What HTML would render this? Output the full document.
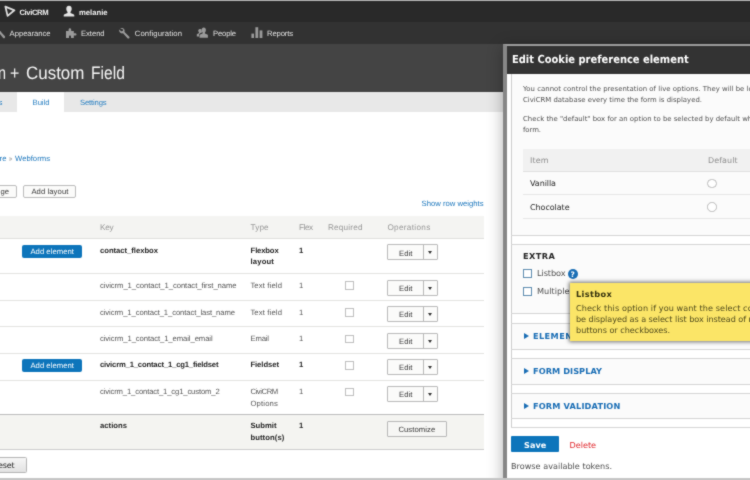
<!DOCTYPE html>
<html lang="en">
<head>
<meta charset="utf-8">
<title>Webform + Custom Field | Build</title>
<style>
html,body{margin:0;padding:0;background:#fff;}
body{text-rendering:geometricPrecision;width:750px;height:480px;overflow:hidden;position:relative;font-family:"Liberation Sans",sans-serif;}
#page{position:absolute;left:0;top:0;width:750px;height:480px;overflow:hidden;background:#fff;filter:url(#soft);}
.a{position:absolute;box-sizing:border-box;}
.t{position:absolute;white-space:nowrap;transform-origin:0 50%;display:block;}
.btn{position:absolute;box-sizing:border-box;border:1px solid #bcbcbc;border-radius:2px;background:#fbfbfa;}
.pbtn{position:absolute;box-sizing:border-box;border-radius:2px;background:#0d75bb;}
.hl{position:absolute;height:1px;left:0;width:484px;background:#e3e3e0;}
.cb{position:absolute;box-sizing:border-box;width:9.4px;height:8.8px;border:1px solid #bfbfbf;background:#fff;left:345px;}
.db{position:absolute;box-sizing:border-box;left:387px;width:51px;height:16px;border:1px solid #bababa;border-radius:1px;background:#fbfbfa;}
.db i{position:absolute;left:35.4px;top:0;bottom:0;width:1px;background:#b8b8b8;}
.db b{position:absolute;left:40px;top:6px;width:0;height:0;border-left:2.7px solid transparent;border-right:2.7px solid transparent;border-top:3.2px solid #333;}
.dl{position:absolute;height:1px;left:511px;width:239px;background:#d5d5d5;}
.dcb{position:absolute;box-sizing:border-box;left:523px;width:9.2px;height:9.2px;border:1px solid #5f8db0;background:#fff;}
.rad{position:absolute;box-sizing:border-box;width:9.4px;height:9.4px;border-radius:50%;border:1px solid #b9b9b9;background:#fff;left:707.3px;}
.tri{position:absolute;width:0;height:0;border-top:3px solid transparent;border-bottom:3px solid transparent;border-left:5.4px solid #1a6eb5;left:523.8px;}
</style>
</head>
<body>
<svg width="0" height="0" style="position:absolute"><defs><filter id="soft" x="0" y="0" width="100%" height="100%" color-interpolation-filters="sRGB"><feConvolveMatrix order="3" kernelMatrix="0.03 0.08 0.03 0.08 0.56 0.08 0.03 0.08 0.03" divisor="1" edgeMode="duplicate" preserveAlpha="true"/></filter></defs></svg>
<div id="page">
  <!-- admin toolbar -->
  <div class="a" style="left:0;top:0;width:750px;height:22px;background:#292929;"></div>
  <div class="a" style="left:0;top:0;width:750px;height:1px;background:#b5b5b5;"></div>
  <div class="a" style="left:0;top:22px;width:750px;height:22px;background:#323232;"></div>
  <!-- page header -->
  <div class="a" style="left:0;top:44px;width:750px;height:48px;background:#444444;"></div>
  <!-- tabs -->
  <div class="a" style="left:0;top:92px;width:750px;height:20px;background:#e8e8e8;"></div>
  <div class="a" style="left:17px;top:92px;width:47px;height:20px;background:#ffffff;"></div>

  <!-- toolbar icons -->
  <svg class="a" style="left:0;top:0;" width="300" height="44" viewBox="0 0 300 44">
    <!-- CiviCRM -->
    <path d="M5.4 6.6 L14.4 10.3 L7.6 15.9 Z" fill="none" stroke="#dedede" stroke-width="1.8" stroke-linejoin="round"/>
    <!-- user -->
    <path d="M69 5.8c1.7 0 2.7 1.3 2.7 3 0 1.3-.5 2.4-1.2 3.1v1l3 1.3c.5.2.8.6.8 1.1v1.2H63.700v-1.200c0-.5.3-.9.8-1.100l3-1.300v-1c-.7-.7-1.200-1.800-1.200-3.100 0-1.700 1-3 2.700-3z" fill="#e4e4e4"/>
    <!-- wrench (appearance, clipped) -->
    <path d="M-1 31.500l1.500-.5 1.200 1.700 3 3.400c.6.700.5 1.500 0 1.900-.5.400-1.200.3-1.700-.3l-3-3.700-1.800-.3z" fill="#9a9a9a"/>
    <!-- puzzle (extend) -->
    <path d="M66 31h2.600v-1.300c0-.9.600-1.500 1.300-1.500s1.300.6 1.300 1.500V31h2.600v2.200h1.200c.9 0 1.500.5 1.500 1.200s-.6 1.200-1.500 1.200h-1.200v2.400h-2.800v-1.400c0-.6-.4-1-1-1s-1 .4-1 1V38H66z" fill="#9a9a9a"/>
    <!-- wrench (configuration) -->
    <path d="M120.200 28.300c1.500-.7 3.200-.2 4 1 .5.800.6 1.700.3 2.600l4.600 4.500c.6.600.6 1.400.1 1.900s-1.400.4-1.900-.2l-4.300-4.800c-.9.300-1.900.1-2.700-.5-1-.8-1.400-2.100-1-3.300l1.900 1.800 1.600-.4.400-1.500z" fill="#9a9a9a"/>
    <!-- people -->
    <path d="M203.800 27.600c1.300 0 2.100 1 2.100 2.400 0 1-.4 1.900-1 2.500v.9l2.400 1.100c.4.200.6.500.6.900v2.400h-8.400v-2.400c0-.4.200-.7.600-.9l2.500-1.100v-.9c-.6-.6-1-1.500-1-2.500 0-1.400.9-2.400 2.200-2.400z" fill="#9a9a9a"/>
    <path d="M200.400 29c.5 0 .9.200 1.200.5-.1 1 .1 2 .7 2.800l-2.100 1c-.8.300-1.200.9-1.200 1.700v1.500h-2.200v-1.900c0-.3.200-.6.500-.7l1.700-.8v-.7c-.5-.4-.8-1.100-.8-1.800 0-1 .8-1.600 2.200-1.600z" fill="#9a9a9a"/>
    <!-- reports (bars) -->
    <rect x="251.400" y="33.600" width="2.600" height="4.400" fill="#9a9a9a"/>
    <rect x="255.400" y="27.200" width="2.800" height="10.800" fill="#9a9a9a"/>
    <rect x="259.600" y="30.400" width="2.800" height="7.600" fill="#9a9a9a"/>
  </svg>

  <!-- local action buttons -->
  <div class="btn" style="left:-10px;top:185px;width:26.600px;height:12.600px;"></div>
  <div class="btn" style="left:23.200px;top:185px;width:53.200px;height:12.600px;"></div>

  <!-- table -->
  <div class="a" style="left:0;top:216px;width:484px;height:22.500px;background:#f4f4f2;border-bottom:1px solid #e0e0dd;"></div>
  <div class="hl" style="top:273px;"></div>
  <div class="hl" style="top:299.800px;"></div>
  <div class="hl" style="top:326.400px;"></div>
  <div class="hl" style="top:353.200px;"></div>
  <div class="hl" style="top:379.600px;"></div>
  <div class="a" style="left:0;top:414px;width:484px;height:36px;background:#f4f4f1;border-top:1px solid #bcbcbc;border-bottom:1px solid #cdcdcd;"></div>

  <div class="pbtn" style="left:22px;top:245px;width:60px;height:13px;"></div>
  <div class="pbtn" style="left:22px;top:359.300px;width:60px;height:13px;"></div>

  <div class="cb" style="top:281.300px;"></div>
  <div class="cb" style="top:307.900px;"></div>
  <div class="cb" style="top:334.500px;"></div>
  <div class="cb" style="top:361px;"></div>
  <div class="cb" style="top:387.600px;"></div>

  <div class="db" style="top:244.400px;"><i></i><b></b></div>
  <div class="db" style="top:279.500px;"><i></i><b></b></div>
  <div class="db" style="top:306px;"><i></i><b></b></div>
  <div class="db" style="top:332.600px;"><i></i><b></b></div>
  <div class="db" style="top:359px;"><i></i><b></b></div>
  <div class="db" style="top:386px;"><i></i><b></b></div>
  <div class="btn" style="left:387px;top:421px;width:59.600px;height:16px;border-color:#b8b8b8;background:#f6f6f4;border-radius:1px;"></div>

  <div class="btn" style="left:-10px;top:457.300px;width:37px;height:16.200px;border-color:#b4b4b4;background:linear-gradient(#f6f6f6,#e2e2e2);border-radius:1.5px;"></div>

  <!-- dialog -->
  <div class="a" id="dlg" style="left:503px;top:44px;width:300px;height:500px;background:#ffffff;border:solid #878787;border-width:2px 4px;border-top-color:#9c9c9c;box-shadow:0 3px 15px rgba(0,0,0,0.300);"></div>
  <div class="a" style="left:507px;top:46px;width:243px;height:27.500px;background:#333333;"></div>
  <div class="a" style="left:511px;top:74px;width:239px;height:353.400px;background:#fbfbfb;border-left:1px solid #cdcdcd;"></div>
  <!-- options table -->
  <div class="a" style="left:523px;top:148.500px;width:227px;height:23.200px;background:#f1f1f1;border-bottom:1px solid #e0e0e0;"></div>
  <div class="a" style="left:523px;top:194.400px;width:227px;height:1px;background:#e6e6e6;"></div>
  <div class="a" style="left:523px;top:217.800px;width:227px;height:1px;background:#e6e6e6;"></div>
  <div class="rad" style="top:179px;"></div>
  <div class="rad" style="top:202.300px;"></div>
  <!-- fieldset separators -->
  <div class="a" style="left:512px;top:236px;width:238px;height:8.400px;background:#fff;"></div>
  <div class="a" style="left:512px;top:314px;width:238px;height:9px;background:#fff;"></div>
  <div class="a" style="left:512px;top:349.400px;width:238px;height:9px;background:#fff;"></div>
  <div class="a" style="left:512px;top:384.400px;width:238px;height:8.600px;background:#fff;"></div>
  <div class="a" style="left:512px;top:418.800px;width:238px;height:8px;background:#fff;"></div>
  <div class="dl" style="top:235.400px;"></div>
  <div class="dl" style="top:244.200px;"></div>
  <div class="dl" style="top:313.400px;"></div>
  <div class="dl" style="top:322.800px;"></div>
  <div class="dl" style="top:348.800px;"></div>
  <div class="dl" style="top:358.200px;"></div>
  <div class="dl" style="top:383.800px;"></div>
  <div class="dl" style="top:392.800px;"></div>
  <div class="dl" style="top:418.200px;"></div>
  <div class="dl" style="top:426.800px;"></div>
  <div class="dcb" style="top:269.300px;"></div>
  <div class="dcb" style="top:287.300px;"></div>
  <!-- help icon -->
  <div class="a" style="left:567.600px;top:269.400px;width:10px;height:10px;border-radius:50%;background:#1a6eb5;"></div>
  <span class="t" style='left:570.400px;top:269.600px;font-family:"DejaVu Sans",sans-serif;font-weight:700;font-size:7.500px;line-height:10px;color:#fff;'>?</span>
  <div class="tri" style="top:333.400px;"></div>
  <div class="tri" style="top:368.200px;"></div>
  <div class="tri" style="top:403px;"></div>
  <div class="pbtn" style="left:511px;top:436.400px;width:48px;height:15.600px;border-radius:1px;"></div>

<span class="t" style='left:19.40px;top:7.53px;font-family:"Liberation Sans", sans-serif;font-size:7.7px;line-height:10px;color:#f0f0f0;font-weight:700;letter-spacing:-0.401px;'>CiviCRM</span>
<span class="t" style='left:79.00px;top:7.53px;font-family:"Liberation Sans", sans-serif;font-size:7.7px;line-height:10px;color:#f0f0f0;font-weight:700;letter-spacing:-0.006px;'>melanie</span>
<span class="t" style='left:9.60px;top:28.93px;font-family:"Liberation Sans", sans-serif;font-size:7.7px;line-height:10px;color:#e2e2e2;letter-spacing:-0.049px;'>Appearance</span>
<span class="t" style='left:81.00px;top:28.93px;font-family:"Liberation Sans", sans-serif;font-size:7.7px;line-height:10px;color:#e2e2e2;letter-spacing:-0.061px;'>Extend</span>
<span class="t" style='left:134.80px;top:28.93px;font-family:"Liberation Sans", sans-serif;font-size:7.7px;line-height:10px;color:#e2e2e2;letter-spacing:0.117px;'>Configuration</span>
<span class="t" style='left:213.00px;top:28.93px;font-family:"Liberation Sans", sans-serif;font-size:7.7px;line-height:10px;color:#e2e2e2;letter-spacing:-0.170px;'>People</span>
<span class="t" style='left:267.00px;top:28.93px;font-family:"Liberation Sans", sans-serif;font-size:7.7px;line-height:10px;color:#e2e2e2;letter-spacing:-0.142px;'>Reports</span>
<span class="t" style='left:-2.20px;top:61.96px;font-family:"Liberation Sans", sans-serif;font-size:18px;line-height:23px;color:#f4f4f4;transform:scaleX(0.7988);'>n</span>
<span class="t" style='left:9.80px;top:61.96px;font-family:"Liberation Sans", sans-serif;font-size:18px;line-height:23px;color:#f4f4f4;transform:scaleX(0.8844);'>+</span>
<span class="t" style='left:26.00px;top:61.96px;font-family:"Liberation Sans", sans-serif;font-size:18px;line-height:23px;color:#f4f4f4;transform:scaleX(0.9417);'>Custom</span>
<span class="t" style='left:91.30px;top:61.96px;font-family:"Liberation Sans", sans-serif;font-size:18px;line-height:23px;color:#f4f4f4;transform:scaleX(0.8663);'>Field</span>
<span class="t" style='left:-2.50px;top:97.53px;font-family:"Liberation Sans", sans-serif;font-size:7.7px;line-height:10px;color:#2a80c2;transform:scaleX(1.1707);'>s</span>
<span class="t" style='left:32.60px;top:97.53px;font-family:"Liberation Sans", sans-serif;font-size:7.7px;line-height:10px;color:#2a80c2;letter-spacing:-0.069px;'>Build</span>
<span class="t" style='left:80.00px;top:97.53px;font-family:"Liberation Sans", sans-serif;font-size:7.7px;line-height:10px;color:#2a80c2;letter-spacing:-0.158px;'>Settings</span>
<span class="t" style='left:-0.50px;top:153.93px;font-family:"Liberation Sans", sans-serif;font-size:7.7px;line-height:10px;color:#1b76bc;letter-spacing:0.104px;'>re</span>
<span class="t" style='left:9.00px;top:153.93px;font-family:"Liberation Sans", sans-serif;font-size:7.7px;line-height:10px;color:#777777;transform:scaleX(0.7007);'>»</span>
<span class="t" style='left:15.00px;top:153.93px;font-family:"Liberation Sans", sans-serif;font-size:7.7px;line-height:10px;color:#1b76bc;letter-spacing:0.015px;'>Webforms</span>
<span class="t" style='left:0.50px;top:186.73px;font-family:"Liberation Sans", sans-serif;font-size:7.7px;line-height:10px;color:#383838;letter-spacing:-0.042px;'>ge</span>
<span class="t" style='left:31.40px;top:186.73px;font-family:"Liberation Sans", sans-serif;font-size:7.7px;line-height:10px;color:#383838;letter-spacing:0.071px;'>Add layout</span>
<span class="t" style='left:421.60px;top:198.53px;font-family:"Liberation Sans", sans-serif;font-size:7.7px;line-height:10px;color:#1b76bc;letter-spacing:0.002px;'>Show row weights</span>
<span class="t" style='left:100.00px;top:222.06px;font-family:"Liberation Sans", sans-serif;font-size:8.2px;line-height:11px;color:#969696;letter-spacing:-0.284px;'>Key</span>
<span class="t" style='left:250.60px;top:222.06px;font-family:"Liberation Sans", sans-serif;font-size:8.2px;line-height:11px;color:#969696;letter-spacing:0.071px;'>Type</span>
<span class="t" style='left:299.00px;top:222.06px;font-family:"Liberation Sans", sans-serif;font-size:8.2px;line-height:11px;color:#969696;letter-spacing:-0.420px;'>Flex</span>
<span class="t" style='left:328.00px;top:222.06px;font-family:"Liberation Sans", sans-serif;font-size:8.2px;line-height:11px;color:#969696;letter-spacing:0.182px;'>Required</span>
<span class="t" style='left:387.40px;top:222.06px;font-family:"Liberation Sans", sans-serif;font-size:8.2px;line-height:11px;color:#969696;letter-spacing:0.309px;'>Operations</span>
<span class="t" style='left:30.40px;top:247.23px;font-family:"Liberation Sans", sans-serif;font-size:7.7px;line-height:10px;color:#ffffff;letter-spacing:0.041px;'>Add element</span>
<span class="t" style='left:100.00px;top:245.53px;font-family:"Liberation Sans", sans-serif;font-size:7.7px;line-height:10px;color:#262626;font-weight:700;letter-spacing:-0.037px;'>contact_flexbox</span>
<span class="t" style='left:250.60px;top:245.53px;font-family:"Liberation Sans", sans-serif;font-size:7.7px;line-height:10px;color:#262626;font-weight:700;letter-spacing:-0.163px;'>Flexbox</span>
<span class="t" style='left:250.60px;top:256.93px;font-family:"Liberation Sans", sans-serif;font-size:7.7px;line-height:10px;color:#262626;font-weight:700;letter-spacing:0.138px;'>layout</span>
<span class="t" style='left:299.00px;top:245.53px;font-family:"Liberation Sans", sans-serif;font-size:7.7px;line-height:10px;color:#262626;font-weight:700;'>1</span>
<span class="t" style='left:100.00px;top:280.93px;font-family:"Liberation Sans", sans-serif;font-size:7.7px;line-height:10px;color:#565656;letter-spacing:-0.072px;'>civicrm_1_contact_1_contact_first_name</span>
<span class="t" style='left:250.40px;top:280.93px;font-family:"Liberation Sans", sans-serif;font-size:7.7px;line-height:10px;color:#565656;letter-spacing:0.132px;'>Text field</span>
<span class="t" style='left:299.00px;top:280.93px;font-family:"Liberation Sans", sans-serif;font-size:7.7px;line-height:10px;color:#565656;'>1</span>
<span class="t" style='left:100.00px;top:307.53px;font-family:"Liberation Sans", sans-serif;font-size:7.7px;line-height:10px;color:#565656;letter-spacing:-0.107px;'>civicrm_1_contact_1_contact_last_name</span>
<span class="t" style='left:250.40px;top:307.53px;font-family:"Liberation Sans", sans-serif;font-size:7.7px;line-height:10px;color:#565656;letter-spacing:0.132px;'>Text field</span>
<span class="t" style='left:299.00px;top:307.53px;font-family:"Liberation Sans", sans-serif;font-size:7.7px;line-height:10px;color:#565656;'>1</span>
<span class="t" style='left:100.00px;top:334.13px;font-family:"Liberation Sans", sans-serif;font-size:7.7px;line-height:10px;color:#565656;letter-spacing:-0.091px;'>civicrm_1_contact_1_email_email</span>
<span class="t" style='left:250.40px;top:334.13px;font-family:"Liberation Sans", sans-serif;font-size:7.7px;line-height:10px;color:#565656;letter-spacing:-0.141px;'>Email</span>
<span class="t" style='left:299.00px;top:334.13px;font-family:"Liberation Sans", sans-serif;font-size:7.7px;line-height:10px;color:#565656;'>1</span>
<span class="t" style='left:30.40px;top:361.43px;font-family:"Liberation Sans", sans-serif;font-size:7.7px;line-height:10px;color:#ffffff;letter-spacing:0.041px;'>Add element</span>
<span class="t" style='left:100.00px;top:360.13px;font-family:"Liberation Sans", sans-serif;font-size:7.7px;line-height:10px;color:#262626;font-weight:700;letter-spacing:-0.189px;'>civicrm_1_contact_1_cg1_fieldset</span>
<span class="t" style='left:250.40px;top:360.13px;font-family:"Liberation Sans", sans-serif;font-size:7.7px;line-height:10px;color:#262626;font-weight:700;letter-spacing:-0.062px;'>Fieldset</span>
<span class="t" style='left:299.00px;top:360.13px;font-family:"Liberation Sans", sans-serif;font-size:7.7px;line-height:10px;color:#262626;font-weight:700;'>1</span>
<span class="t" style='left:100.00px;top:387.13px;font-family:"Liberation Sans", sans-serif;font-size:7.7px;line-height:10px;color:#565656;letter-spacing:-0.151px;'>civicrm_1_contact_1_cg1_custom_2</span>
<span class="t" style='left:250.40px;top:387.13px;font-family:"Liberation Sans", sans-serif;font-size:7.7px;line-height:10px;color:#565656;letter-spacing:-0.420px;'>CiviCRM</span>
<span class="t" style='left:250.40px;top:398.73px;font-family:"Liberation Sans", sans-serif;font-size:7.7px;line-height:10px;color:#565656;letter-spacing:0.169px;'>Options</span>
<span class="t" style='left:299.00px;top:387.13px;font-family:"Liberation Sans", sans-serif;font-size:7.7px;line-height:10px;color:#565656;'>1</span>
<span class="t" style='left:100.00px;top:421.13px;font-family:"Liberation Sans", sans-serif;font-size:7.7px;line-height:10px;color:#262626;font-weight:700;letter-spacing:0.012px;'>actions</span>
<span class="t" style='left:250.40px;top:421.13px;font-family:"Liberation Sans", sans-serif;font-size:7.7px;line-height:10px;color:#262626;font-weight:700;letter-spacing:0.025px;'>Submit</span>
<span class="t" style='left:250.40px;top:432.53px;font-family:"Liberation Sans", sans-serif;font-size:7.7px;line-height:10px;color:#262626;font-weight:700;letter-spacing:0.081px;'>button(s)</span>
<span class="t" style='left:299.00px;top:421.13px;font-family:"Liberation Sans", sans-serif;font-size:7.7px;line-height:10px;color:#262626;font-weight:700;'>1</span>
<span class="t" style='left:399.00px;top:248.73px;font-family:"Liberation Sans", sans-serif;font-size:7.7px;line-height:10px;color:#383838;letter-spacing:0.043px;'>Edit</span>
<span class="t" style='left:399.00px;top:283.73px;font-family:"Liberation Sans", sans-serif;font-size:7.7px;line-height:10px;color:#383838;letter-spacing:0.043px;'>Edit</span>
<span class="t" style='left:399.00px;top:310.13px;font-family:"Liberation Sans", sans-serif;font-size:7.7px;line-height:10px;color:#383838;letter-spacing:0.043px;'>Edit</span>
<span class="t" style='left:399.00px;top:336.73px;font-family:"Liberation Sans", sans-serif;font-size:7.7px;line-height:10px;color:#383838;letter-spacing:0.043px;'>Edit</span>
<span class="t" style='left:399.00px;top:363.13px;font-family:"Liberation Sans", sans-serif;font-size:7.7px;line-height:10px;color:#383838;letter-spacing:0.043px;'>Edit</span>
<span class="t" style='left:399.00px;top:390.13px;font-family:"Liberation Sans", sans-serif;font-size:7.7px;line-height:10px;color:#383838;letter-spacing:0.043px;'>Edit</span>
<span class="t" style='left:398.40px;top:424.73px;font-family:"Liberation Sans", sans-serif;font-size:7.7px;line-height:10px;color:#383838;letter-spacing:0.056px;'>Customize</span>
<span class="t" style='left:-2.10px;top:461.13px;font-family:"DejaVu Sans", "Liberation Sans", sans-serif;font-size:8px;line-height:10px;color:#262626;letter-spacing:-0.159px;'>eset</span>
<span class="t" style='left:511.90px;top:53.19px;font-family:"DejaVu Sans Condensed", "DejaVu Sans", sans-serif;font-size:11px;line-height:14px;color:#ffffff;font-weight:700;transform:scaleX(1.0018);'>Edit Cookie preference element</span>
<span class="t" style='left:523.00px;top:84.91px;font-family:"DejaVu Sans", "Liberation Sans", sans-serif;font-size:6.9px;line-height:9px;color:#4e4e4e;letter-spacing:0.029px;'>You cannot control the presentation of live options. They will be loaded from the</span>
<span class="t" style='left:523.00px;top:96.41px;font-family:"DejaVu Sans", "Liberation Sans", sans-serif;font-size:6.9px;line-height:9px;color:#4e4e4e;letter-spacing:0.005px;'>CiviCRM database every time the form is displayed.</span>
<span class="t" style='left:523.00px;top:114.71px;font-family:"DejaVu Sans", "Liberation Sans", sans-serif;font-size:6.9px;line-height:9px;color:#4e4e4e;letter-spacing:0.003px;'>Check the "default" box for an option to be selected by default when viewing the</span>
<span class="t" style='left:523.00px;top:125.71px;font-family:"DejaVu Sans", "Liberation Sans", sans-serif;font-size:6.9px;line-height:9px;color:#4e4e4e;letter-spacing:-0.059px;'>form.</span>
<span class="t" style='left:530.00px;top:156.23px;font-family:"DejaVu Sans", "Liberation Sans", sans-serif;font-size:8.0px;line-height:10px;color:#8c8c8c;letter-spacing:0.109px;'>Item</span>
<span class="t" style='left:708.00px;top:156.23px;font-family:"DejaVu Sans", "Liberation Sans", sans-serif;font-size:8.0px;line-height:10px;color:#8c8c8c;letter-spacing:0.056px;'>Default</span>
<span class="t" style='left:530.00px;top:179.43px;font-family:"DejaVu Sans", "Liberation Sans", sans-serif;font-size:8.0px;line-height:10px;color:#262626;letter-spacing:-0.062px;'>Vanilla</span>
<span class="t" style='left:530.00px;top:203.03px;font-family:"DejaVu Sans", "Liberation Sans", sans-serif;font-size:8.0px;line-height:10px;color:#262626;letter-spacing:-0.051px;'>Chocolate</span>
<span class="t" style='left:523.00px;top:251.06px;font-family:"DejaVu Sans", "Liberation Sans", sans-serif;font-size:8.2px;line-height:11px;color:#262626;font-weight:700;letter-spacing:0.413px;'>EXTRA</span>
<span class="t" style='left:537.00px;top:268.06px;font-family:"DejaVu Sans", "Liberation Sans", sans-serif;font-size:8.2px;line-height:11px;color:#4e4e4e;letter-spacing:-0.081px;'>Listbox</span>
<span class="t" style='left:537.00px;top:286.26px;font-family:"DejaVu Sans", "Liberation Sans", sans-serif;font-size:8.2px;line-height:11px;color:#4e4e4e;letter-spacing:0.009px;'>Multiple</span>
<span class="t" style='left:533.00px;top:331.06px;font-family:"DejaVu Sans", "Liberation Sans", sans-serif;font-size:8.2px;line-height:11px;color:#1a6eb5;font-weight:700;letter-spacing:0.4px;'>ELEMENT SETTINGS</span>
<span class="t" style='left:533.00px;top:365.86px;font-family:"DejaVu Sans", "Liberation Sans", sans-serif;font-size:8.2px;line-height:11px;color:#1a6eb5;font-weight:700;letter-spacing:0.061px;'>FORM DISPLAY</span>
<span class="t" style='left:533.00px;top:400.66px;font-family:"DejaVu Sans", "Liberation Sans", sans-serif;font-size:8.2px;line-height:11px;color:#1a6eb5;font-weight:700;letter-spacing:0.153px;'>FORM VALIDATION</span>
<span class="t" style='left:524.00px;top:439.90px;font-family:"DejaVu Sans", "Liberation Sans", sans-serif;font-size:8.1px;line-height:11px;color:#ffffff;font-weight:700;letter-spacing:0.096px;'>Save</span>
<span class="t" style='left:569.60px;top:439.90px;font-family:"DejaVu Sans", "Liberation Sans", sans-serif;font-size:8.1px;line-height:11px;color:#e0262b;letter-spacing:-0.035px;'>Delete</span>
<span class="t" style='left:511.00px;top:461.10px;font-family:"DejaVu Sans", "Liberation Sans", sans-serif;font-size:8.1px;line-height:11px;color:#4e4e4e;letter-spacing:0.018px;'>Browse available tokens.</span>

  <!-- tooltip -->
  <div class="a" style="left:570px;top:282.800px;width:200px;height:58px;background:#fbe567;box-shadow:0 0 4px 1px rgba(0,0,0,0.550);"></div>
<span class="t" style='left:576.00px;top:289.26px;font-family:"DejaVu Sans", "Liberation Sans", sans-serif;font-size:8.2px;line-height:11px;color:#33300c;font-weight:700;letter-spacing:0.373px;'>Listbox</span>
<span class="t" style='left:576.00px;top:302.50px;font-family:"DejaVu Sans", "Liberation Sans", sans-serif;font-size:8.1px;line-height:11px;color:#4f4a1c;letter-spacing:0.1px;'>Check this option if you want the select control to</span>
<span class="t" style='left:576.00px;top:313.90px;font-family:"DejaVu Sans", "Liberation Sans", sans-serif;font-size:8.1px;line-height:11px;color:#4f4a1c;letter-spacing:-0.044px;'>be displayed as a select list box instead of radio</span>
<span class="t" style='left:576.00px;top:325.10px;font-family:"DejaVu Sans", "Liberation Sans", sans-serif;font-size:8.1px;line-height:11px;color:#4f4a1c;letter-spacing:-0.009px;'>buttons or checkboxes.</span>

  <!-- bottom edge -->
  <div class="a" style="left:0;top:478.400px;width:750px;height:2px;background:#c6c6c6;"></div>
</div>
</body>
</html>
